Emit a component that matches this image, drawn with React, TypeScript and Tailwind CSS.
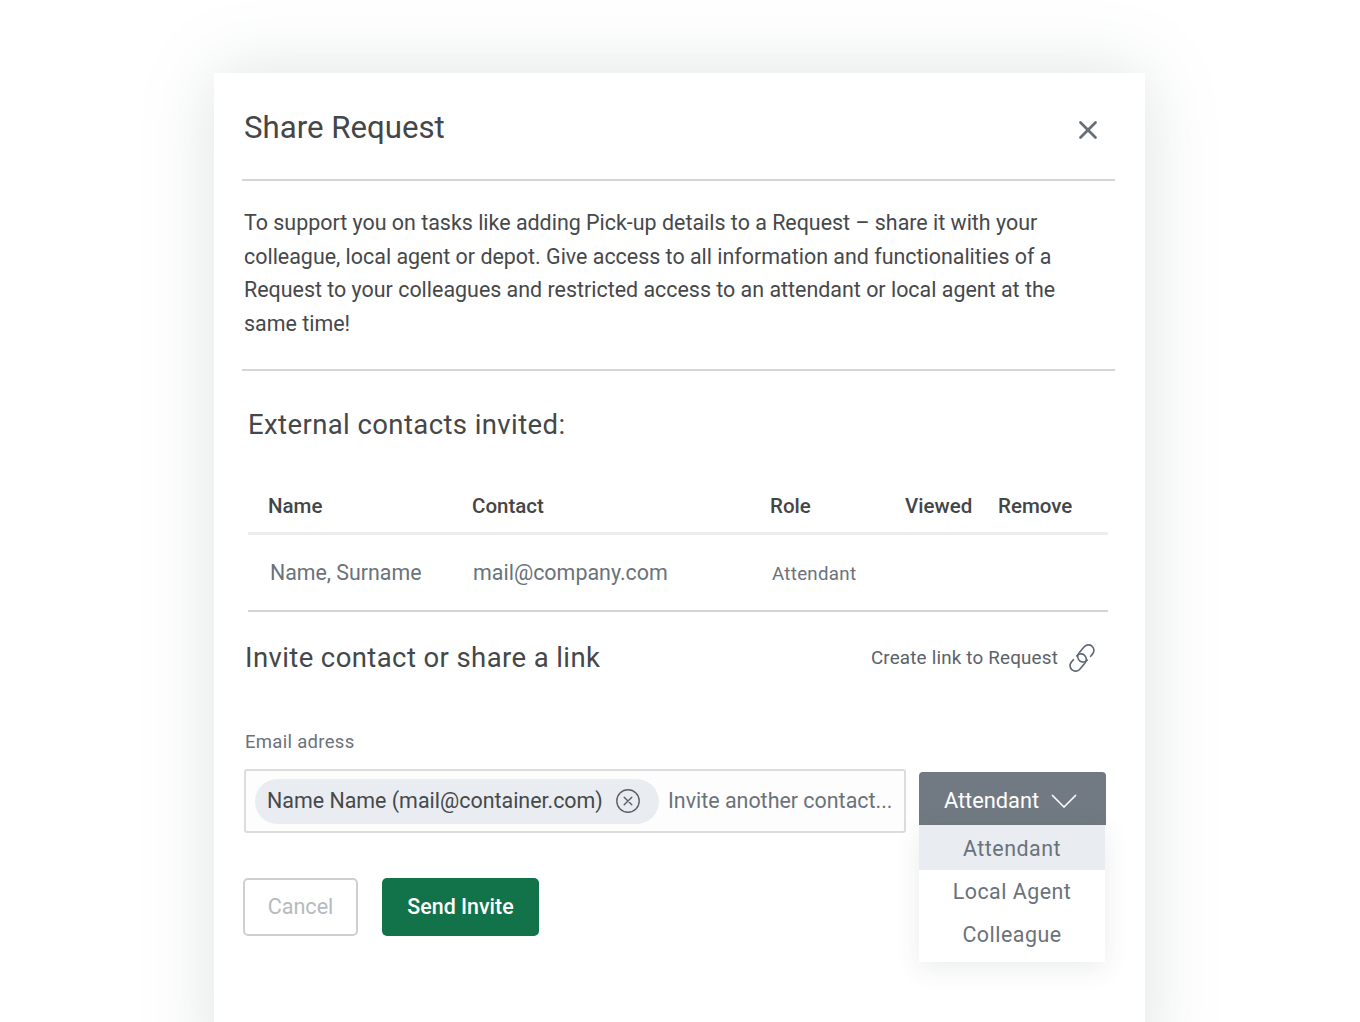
import { X } from "lucide-react";

const headers = [
  { label: "Name", w: "w-[204px]" },
  { label: "Contact", w: "w-[298px]" },
  { label: "Role", w: "w-[135px]" },
  { label: "Viewed", w: "w-[93px]" },
  { label: "Remove", w: "w-[90px]" },
];

function LinkIcon() {
  return (
    <svg width="28" height="30" viewBox="2 2 22 24" fill="none" stroke="#5f6870" strokeWidth="1.3" strokeLinecap="round" strokeLinejoin="round">
      <g transform="translate(13 14) rotate(-50)">
        <path d="M1.5 4.4A4.4 4.4 0 0 1 1.5 -4.4H8A4.4 4.4 0 0 1 8 4.4H5.5" />
        <path d="M-1.5 -4.4A4.4 4.4 0 0 1 -1.5 4.4H-8A4.4 4.4 0 0 1 -8 -4.4H-5.5" />
      </g>
    </svg>
  );
}

function RemoveIcon() {
  return (
    <svg width="26" height="26" viewBox="0 0 26 26" fill="none" stroke="#5b6168" strokeWidth="1.4" strokeLinecap="round">
      <circle cx="13" cy="13" r="11.2" />
      <path d="M9.2 9.2l7.6 7.6M16.8 9.2l-7.6 7.6" />
    </svg>
  );
}

export default function App() {
  return (
    <div className="h-[1022px] overflow-hidden bg-white pt-[73px] pl-[214px] font-['Roboto',sans-serif]">
      <div className="h-[1000px] w-[931px] bg-white pr-[30px] pl-[28px] shadow-[0_0_70px_rgba(90,120,105,0.2)]">
        <div className="flex h-[108px] items-start justify-between border-b-2 border-[#d4d5d6] pr-[12px] pl-[2px]">
          <h1 className="mt-[35px] text-[31.2px] leading-[40px] font-normal text-[#444648]">Share Request</h1>
          <X className="mt-[42px]" size={30} strokeWidth={2.2} color="#676f76" />
        </div>

        <p className="h-[190px] border-b-2 border-[#d4d5d6] pt-[25px] pr-[40px] pl-[2px] text-[21.43px] leading-[33.7px] text-[#46484a]">
          To support you on tasks like adding Pick-up details to a Request – share it with your colleague, local agent or depot. Give access to all information and functionalities of a Request to your colleagues and restricted access to an attendant or local agent at the same time!
        </p>

        <h2 className="mt-[36px] ml-[6px] text-[27.5px] leading-[36px] font-normal tracking-[0.4px] text-[#454749]">External contacts invited:</h2>

        <div className="mt-[46px] ml-[6px] w-[860px]">
          <div className="flex h-[46px] items-start border-b-[3px] border-[#eceded] pt-[4px] pl-[20px] text-[20.5px] leading-[26px] font-medium text-[#434547]">
            {headers.map((h) => (
              <div key={h.label} className={h.w}>{h.label}</div>
            ))}
          </div>
          <div className="flex h-[77px] items-center border-b-2 border-[#d4d5d6] pt-[2px] pl-[22px] text-[#6a727a]">
            <div className="w-[203px] text-[21.35px]">Name, Surname</div>
            <div className="w-[299px] text-[21.45px]">mail@company.com</div>
            <div className="pt-[2px] text-[18.7px] tracking-[0.3px]">Attendant</div>
          </div>
        </div>

        <div className="mt-[24px] flex h-[44px] items-center justify-between pr-[19px] pl-[3px]">
          <h2 className="text-[27.5px] leading-[44px] font-normal tracking-[0.4px] text-[#454749]">Invite contact or share a link</h2>
          <div className="flex items-center gap-[10px] text-[18.8px] tracking-[0.2px] text-[#5a6269]">
            <span>Create link to Request</span>
            <LinkIcon />
          </div>
        </div>

        <div className="mt-[49px] ml-[3px] text-[18.5px] leading-[26px] tracking-[0.3px] text-[#6a727a]">Email adress</div>

        <div className="mt-[14px] ml-[2px] flex items-start gap-[13px]">
          <div className="flex h-[64px] w-[662px] items-center rounded-[3px] border-2 border-[#dadcde] bg-[#fdfdfd] pl-[9px]">
            <div className="flex h-[45px] w-[404px] items-center justify-between rounded-full bg-[#e9ecf1] pr-[18px] pl-[12px] text-[21.43px] whitespace-nowrap text-[#46484a]">
              <span>Name Name (mail@container.com)</span>
              <RemoveIcon />
            </div>
            <span className="ml-[9px] text-[21.43px] whitespace-nowrap text-[#6a727a]">Invite another contact...</span>
          </div>

          <div className="relative mt-[3px] w-[187px]">
            <div className="flex h-[53px] items-center justify-center gap-[12px] rounded-t-[4px] bg-[#717a82] pt-[5px] pr-[4px] text-[21.8px] text-white">
              <span>Attendant</span>
              <svg width="26" height="14" viewBox="0 0 26 14" fill="none" stroke="#ffffff" strokeWidth="1.6">
                <path d="M1 1l12 12L25 1" />
              </svg>
            </div>
            <div className="absolute top-[53px] left-0 w-[186px] bg-white text-center text-[21.4px] tracking-[0.5px] text-[#6a727a] shadow-[0_6px_24px_rgba(60,70,80,0.1)]">
              <div className="flex h-[45px] items-center justify-center bg-[#e9ecf1] pt-[4px]">Attendant</div>
              <div className="flex h-[43px] items-center justify-center pt-[2px]">Local Agent</div>
              <div className="flex h-[49px] items-center justify-center pb-[5px]">Colleague</div>
            </div>
          </div>
        </div>

        <div className="mt-[45px] ml-[1px] flex gap-[24px]">
          <button className="h-[58px] w-[115px] rounded-[5px] border-2 border-[#cdd0d3] bg-white text-[21.6px] text-[#b6babe]">Cancel</button>
          <button className="h-[58px] w-[157px] rounded-[5px] bg-[#127249] text-[21.4px] font-medium text-white">Send Invite</button>
        </div>
      </div>
    </div>
  );
}
